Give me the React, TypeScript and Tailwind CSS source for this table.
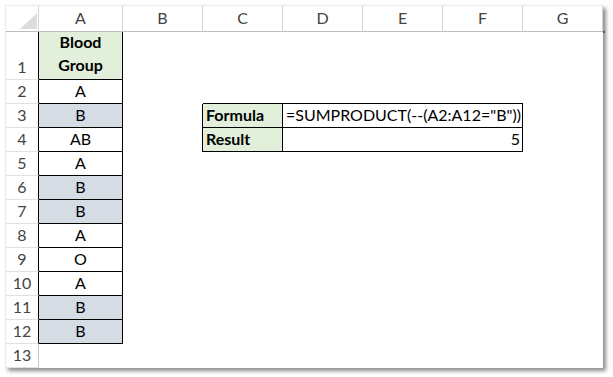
import React from "react";

const COLS = ["A", "B", "C", "D", "E", "F", "G"];
const BLOOD = ["A", "B", "AB", "A", "B", "B", "A", "O", "A", "B", "B"];

const font = { fontFamily: "Lato, 'Open Sans', sans-serif" };

function RowHead({ n, last }: { n: number; last?: boolean }) {
  return (
    <div
      className={
        "flex items-end justify-center pb-[2px] text-[16px] leading-[20px] text-[#444] border-b border-b-[#e1e1e1] " +
        (last ? "border-r border-r-[#c6c6c6]" : "border-r border-r-black")
      }
    >
      {n}
    </div>
  );
}

export default function App() {
  const rows: React.ReactNode[] = [];

  // header row
  rows.push(
    <div key="corner" className="relative border-r border-b border-r-[#d4d4d4] border-b-[#bdbdbd]">
      <svg className="absolute left-[14px] top-[7px]" width="17" height="16" viewBox="0 0 17 16">
        <polygon points="17,0 17,16 0,16" fill="#dcdcdc" />
      </svg>
    </div>
  );
  COLS.forEach((c) =>
    rows.push(
      <div
        key={"h" + c}
        className="flex items-end justify-center pb-[3px] text-[16px] leading-[20px] text-[#444] border-r border-b border-r-[#d4d4d4] border-b-[#bdbdbd]"
      >
        {c}
      </div>
    )
  );

  for (let r = 1; r <= 13; r++) {
    rows.push(<RowHead key={"r" + r} n={r} last={r === 13} />);

    // column A
    if (r === 1) {
      rows.push(
        <div
          key="a1"
          className="flex flex-col items-center justify-end pb-[3px] bg-[#e2efda] border-r border-b border-black text-[16px] leading-[23px] font-bold text-black"
        >
          <span>Blood</span>
          <span>Group</span>
        </div>
      );
    } else if (r <= 12) {
      const v = BLOOD[r - 2];
      rows.push(
        <div
          key={"a" + r}
          className={
            "flex items-end justify-center pb-[2px] border-r border-b border-black text-[16px] leading-[20px] text-black " +
            (v === "B" ? "bg-[#d6dce4]" : "bg-white")
          }
        >
          {v}
        </div>
      );
    } else {
      rows.push(<div key="a13" />);
    }

    // column B
    rows.push(
      <div key={"b" + r} className={r === 3 || r === 4 ? "border-r border-black" : ""} />
    );

    // columns C..F
    if (r === 2) {
      rows.push(<div key="c2" className="border-b border-black" />);
      rows.push(<div key="d2" className="col-span-3 border-b border-black" />);
    } else if (r === 3 || r === 4) {
      rows.push(
        <div
          key={"c" + r}
          className="flex items-end pl-[3px] pb-[2px] bg-[#e2efda] border-r border-b border-black text-[16px] leading-[20px] font-bold text-black"
        >
          {r === 3 ? "Formula" : "Result"}
        </div>
      );
      rows.push(
        <div
          key={"d" + r}
          className={
            "col-span-3 flex items-end pb-[2px] border-r border-b border-black text-[16px] leading-[20px] text-black " +
            (r === 3 ? "justify-start pl-[3px]" : "justify-end pr-[2px]")
          }
        >
          {r === 3 ? '=SUMPRODUCT(--(A2:A12="B"))' : "5"}
        </div>
      );
    } else {
      rows.push(<div key={"c" + r} />);
      rows.push(<div key={"d" + r} className="col-span-3" />);
    }

    // column G
    rows.push(<div key={"g" + r} />);
  }

  return (
    <div className="w-[613px] h-[377px] bg-white pl-[5px] pt-[5px]" style={font}>
      <div className="relative w-[598px] h-[363px] bg-white shadow-[3px_3px_4px_rgba(0,0,0,0.45)] border-t border-l border-[#ececec]">
        <div className="grid grid-cols-[33px_84px_80px_80px_80px_80px_80px_80px] grid-rows-[26px_48px_repeat(12,24px)]">
          {rows}
        </div>
        <div className="absolute right-[-2px] top-[25px] w-[2px] h-[2px] bg-[#217346]" />
      </div>
    </div>
  );
}
